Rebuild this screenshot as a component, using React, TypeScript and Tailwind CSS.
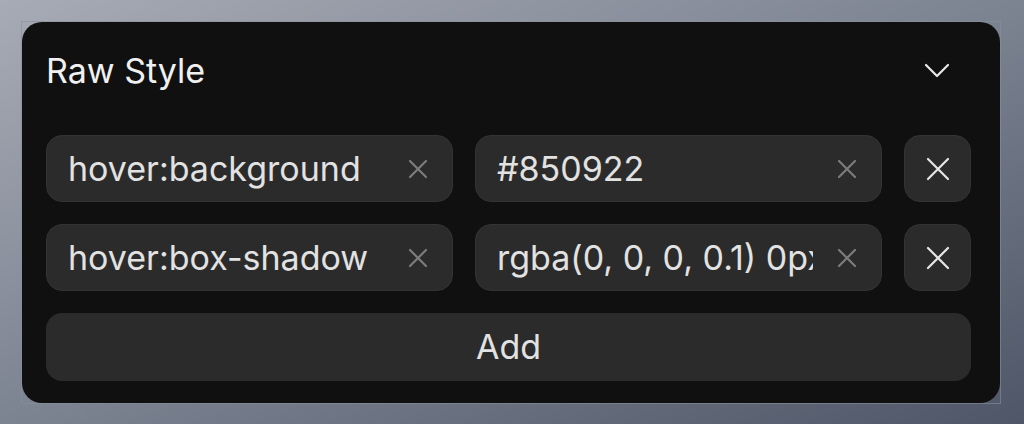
import React from "react";

const rows = [
  { key: "hover:background", value: "#850922" },
  { key: "hover:box-shadow", value: "rgba(0, 0, 0, 0.1) 0px 4px 12px" },
];

function SmallX() {
  return (
    <svg width="20" height="20" viewBox="0 0 20 20" fill="none" stroke="#7c7c7c" strokeWidth="2.2" strokeLinecap="round">
      <path d="M2 2 L18 18 M18 2 L2 18" />
    </svg>
  );
}

function BigX() {
  return (
    <svg width="24" height="24" viewBox="0 0 24 24" fill="none" stroke="#e6e6e6" strokeWidth="2.2" strokeLinecap="round">
      <path d="M2 2 L22 22 M22 2 L2 22" />
    </svg>
  );
}

function Field({ text }: { text: string }) {
  return (
    <div className="flex items-center h-[67px] w-[407px] rounded-[16px] bg-[#2b2b2b] border border-[#333333] pl-[21px] pr-[24px]">
      <div className="flex-1 overflow-hidden whitespace-nowrap text-[34px] leading-[44px] text-[#e2e2e2] mr-[24px]">{text}</div>
      <SmallX />
    </div>
  );
}

export default function App() {
  return (
    <main className="h-screen w-full bg-gradient-to-br from-[#a7abb5] via-[#7c8391] to-[#4f5667] pt-[21px] pl-[21px] font-['Inter',sans-serif]">
      <div className="w-[980px] h-[383px] border border-[#8a8f9a]/60">
        <div className="w-[978px] h-[381px] rounded-[20px] bg-[#101010] pl-[24px] pr-[28px] pb-[22px] flex flex-col">
          <div className="h-[99px] flex items-center justify-between pb-[1px]">
            <h1 className="text-[34px] text-[#f0f0f0] leading-[44px]">Raw Style</h1>
            <svg className="mr-[22px]" width="26" height="15" viewBox="0 0 26 15" fill="none" stroke="#e8e8e8" strokeWidth="2.2" strokeLinecap="round" strokeLinejoin="round">
              <path d="M2 2 L13 13 L24 2" />
            </svg>
          </div>
          <div className="mt-[15px] flex flex-col gap-[22px]">
            {rows.map((r) => (
              <div key={r.key} className="flex gap-[22px]">
                <Field text={r.key} />
                <Field text={r.value} />
                <div className="h-[67px] w-[67px] rounded-[16px] bg-[#2b2b2b] border border-[#333333] flex items-center justify-center">
                  <BigX />
                </div>
              </div>
            ))}
            <div className="h-[68px] w-[925px] rounded-[16px] bg-[#2b2b2b] flex items-center justify-center text-[34px] text-[#e2e2e2] leading-[44px]">
              Add
            </div>
          </div>
        </div>
      </div>
    </main>
  );
}
